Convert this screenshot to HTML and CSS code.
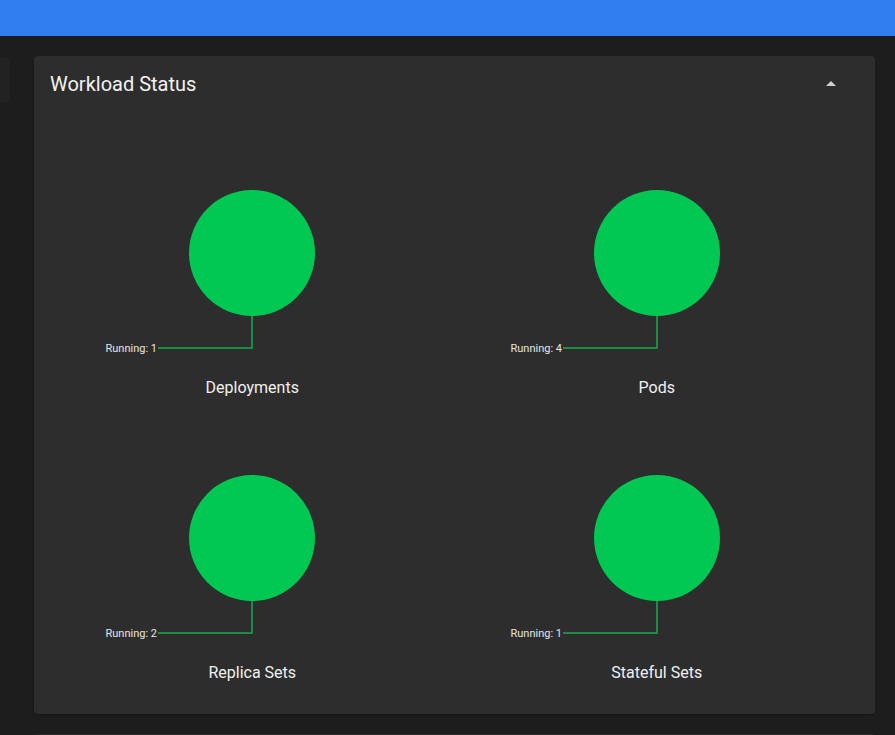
FILE: index.html
```html
<!DOCTYPE html>
<html>
<head>
<meta charset="utf-8">
<link rel="stylesheet" href="styles.css">
</head>
<body>
<header class="appbar"></header>
<div class="content">
  <aside class="side-card"></aside>
  <main class="main">
    <section class="card">
      <div class="card-header">
        <h2 class="card-title">Workload Status</h2>
        <button class="toggle" aria-label="collapse">
          <svg width="24" height="24" viewBox="0 0 24 24"><path d="M7 14l5-5 5 5z" fill="#d0d0d0"/></svg>
        </button>
      </div>
      <div class="charts">
        <div class="chart">
          <svg class="pie" width="300" height="210" viewBox="0 0 300 210">
            <circle cx="150" cy="93" r="63" fill="#00c853"/>
            <polyline points="150,156 150,188 56,188" fill="none" stroke="#1c8c45" stroke-width="2"/>
            <text x="55" y="192" text-anchor="end" class="pie-label">Running: 1</text>
          </svg>
          <div class="chart-name">Deployments</div>
        </div>
        <div class="chart">
          <svg class="pie" width="300" height="210" viewBox="0 0 300 210">
            <circle cx="150" cy="93" r="63" fill="#00c853"/>
            <polyline points="150,156 150,188 56,188" fill="none" stroke="#1c8c45" stroke-width="2"/>
            <text x="55" y="192" text-anchor="end" class="pie-label">Running: 4</text>
          </svg>
          <div class="chart-name">Pods</div>
        </div>
        <div class="chart">
          <svg class="pie" width="300" height="210" viewBox="0 0 300 210">
            <circle cx="150" cy="93" r="63" fill="#00c853"/>
            <polyline points="150,156 150,188 56,188" fill="none" stroke="#1c8c45" stroke-width="2"/>
            <text x="55" y="192" text-anchor="end" class="pie-label">Running: 2</text>
          </svg>
          <div class="chart-name">Replica Sets</div>
        </div>
        <div class="chart">
          <svg class="pie" width="300" height="210" viewBox="0 0 300 210">
            <circle cx="150" cy="93" r="63" fill="#00c853"/>
            <polyline points="150,156 150,188 56,188" fill="none" stroke="#1c8c45" stroke-width="2"/>
            <text x="55" y="192" text-anchor="end" class="pie-label">Running: 1</text>
          </svg>
          <div class="chart-name">Stateful Sets</div>
        </div>
      </div>
    </section>
    <section class="card next-card"></section>
  </main>
</div>
</body>
</html>
```

FILE: styles.css
```css
* { box-sizing: border-box; }
html, body {
  margin: 0;
  padding: 0;
  background: #1d1d1d;
  font-family: Roboto, "Liberation Sans", sans-serif;
  color: #ececec;
  overflow: hidden;
  height: 735px;
}
.appbar {
  height: 36px;
  background: #307ef0;
}
.content {
  display: flex;
  align-items: flex-start;
  padding-top: 20px;
}
.side-card {
  width: 10px;
  height: 44px;
  margin-top: 2px;
  background: #222222;
  border-radius: 0 3px 3px 0;
  flex: none;
}
.main {
  margin-left: 24px;
  width: 841px;
  display: flex;
  flex-direction: column;
  gap: 20px;
}
.card {
  background: #2d2d2d;
  border-radius: 4px;
  box-shadow: 0 1px 2px rgba(0,0,0,0.3);
}
.card-header {
  height: 56px;
  display: flex;
  align-items: center;
  justify-content: space-between;
  padding: 0 32px 0 16px;
}
.card-title {
  margin: 0;
  font-size: 20px;
  font-weight: 400;
  line-height: 28px;
  color: #f2f2f2;
}
.toggle {
  background: none;
  border: 0;
  padding: 0;
  width: 24px;
  height: 24px;
  display: flex;
}
.charts {
  display: grid;
  grid-template-columns: 1fr 1fr;
  row-gap: 45px;
  padding: 48px 16px 29px;
}
.chart {
  display: flex;
  flex-direction: column;
  align-items: center;
  gap: 6px;
}
.pie { display: block; }
.pie-label {
  font-size: 11px;
  fill: #e6e6e6;
  font-family: Roboto, "Liberation Sans", sans-serif;
}
.chart-name {
  font-size: 16px;
  line-height: 24px;
  color: #f0f0f0;
}
.next-card {
  height: 20px;
}
```
